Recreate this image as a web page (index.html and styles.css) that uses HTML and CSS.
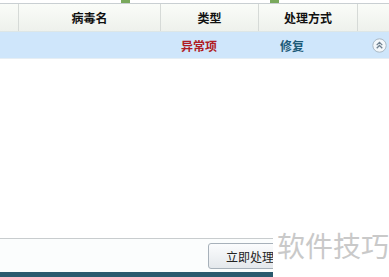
FILE: index.html
```html
<!DOCTYPE html>
<html>
<head>
<meta charset="utf-8">
<link rel="stylesheet" href="styles.css">
</head>
<body>
<div class="page">
  <div class="topstrip">
    <span class="mark mark1"></span>
    <span class="mark mark2"></span>
  </div>
  <div class="thead">
    <div class="c c0"></div>
    <div class="c c1">病毒名</div>
    <div class="c c2">类型</div>
    <div class="c c3">处理方式</div>
    <div class="c c4"></div>
  </div>
  <div class="row">
    <div class="c c0"></div>
    <div class="c c1"></div>
    <div class="c c2 red">异常项</div>
    <div class="c c3 blue">修复</div>
    <div class="c c4">
      <svg class="up" width="15" height="15" viewBox="0 0 15 15">
        <circle cx="7.5" cy="7.5" r="6.7" fill="#f4f8fb" stroke="#a9b8c4" stroke-width="1"/>
        <path d="M4.7 7.1 L7.5 4.3 L10.3 7.1 M4.7 10.3 L7.5 7.5 L10.3 10.3" fill="none" stroke="#6f8190" stroke-width="1.3"/>
      </svg>
    </div>
  </div>
  <div class="body"></div>
  <div class="footer">
    <button class="btn">立即处理</button>
  </div>
  <div class="bottombar"></div>
  <div class="watermark">软件技巧</div>
</div>
</body>
</html>
```
FILE: styles.css
```css
html, body { margin: 0; padding: 0; }
body { width: 389px; height: 277px; overflow: hidden; background: #fff; font-family: "Noto Sans CJK SC", "Liberation Sans", sans-serif; }
.page { position: relative; width: 389px; height: 277px; display: flex; flex-direction: column; }
.topstrip { height: 3px; position: relative; background: #fff; border-bottom: 1px solid #c9cfd2; }
.mark { position: absolute; top: 0; height: 3px; width: 9px; background: #7aa95c; }
.mark1 { left: 121px; }
.mark2 { left: 270px; }
.thead { height: 27px; display: flex; background: linear-gradient(#fafcf8, #eef1ec); border-bottom: 1px solid #dde6e6; }
.c { display: flex; align-items: center; justify-content: center; font-size: 12px; font-weight: bold; color: #111; }
.thead .c { border-right: 1px solid #d6dad7; }
.thead .c4 { border-right: none; }
.c0 { width: 18px; }
.c1 { width: 141px; }
.c2 { width: 97px; }
.c3 { width: 98px; }
.c4 { flex: 1; }
.row { height: 26px; display: flex; background: #cfe6fb; border-bottom: 1px solid #e6eef4; }
.row .c0 { width: 19px; }
.row .c1 { width: 142px; }
.row .c2 { width: 98px; justify-content: flex-start; padding-left: 20px; box-sizing: border-box; }
.row .c3 { width: 99px; justify-content: flex-start; padding-left: 21px; box-sizing: border-box; }
.red { color: #b01c24; }
.blue { color: #1c5a78; }
.row .c4 { justify-content: flex-end; padding-right: 2px; }
.up { display: block; }
.body { flex: 1; background: #fff; border-bottom: 1px solid #c8ccce; }
.footer { height: 33px; background: #fbfdfd; display: flex; align-items: center; padding-left: 208px; }
.btn { width: 84px; height: 26px; margin-top: 1px; border: 1px solid #a7b1ba; border-radius: 3px; background: linear-gradient(#fbfcfd, #e4e8ec); font-family: "Noto Sans CJK SC", sans-serif; font-size: 12px; color: #222; padding: 0; }
.bottombar { height: 5px; background: #2a5a6e; }
.watermark { position: absolute; left: 273px; top: 228px; width: 116px; height: 49px; background: #fff; color: #c9c9c9; font-size: 28px; line-height: 34px; padding-left: 4px; box-sizing: border-box; letter-spacing: 0; font-family: "Noto Sans CJK SC", sans-serif; }
```
